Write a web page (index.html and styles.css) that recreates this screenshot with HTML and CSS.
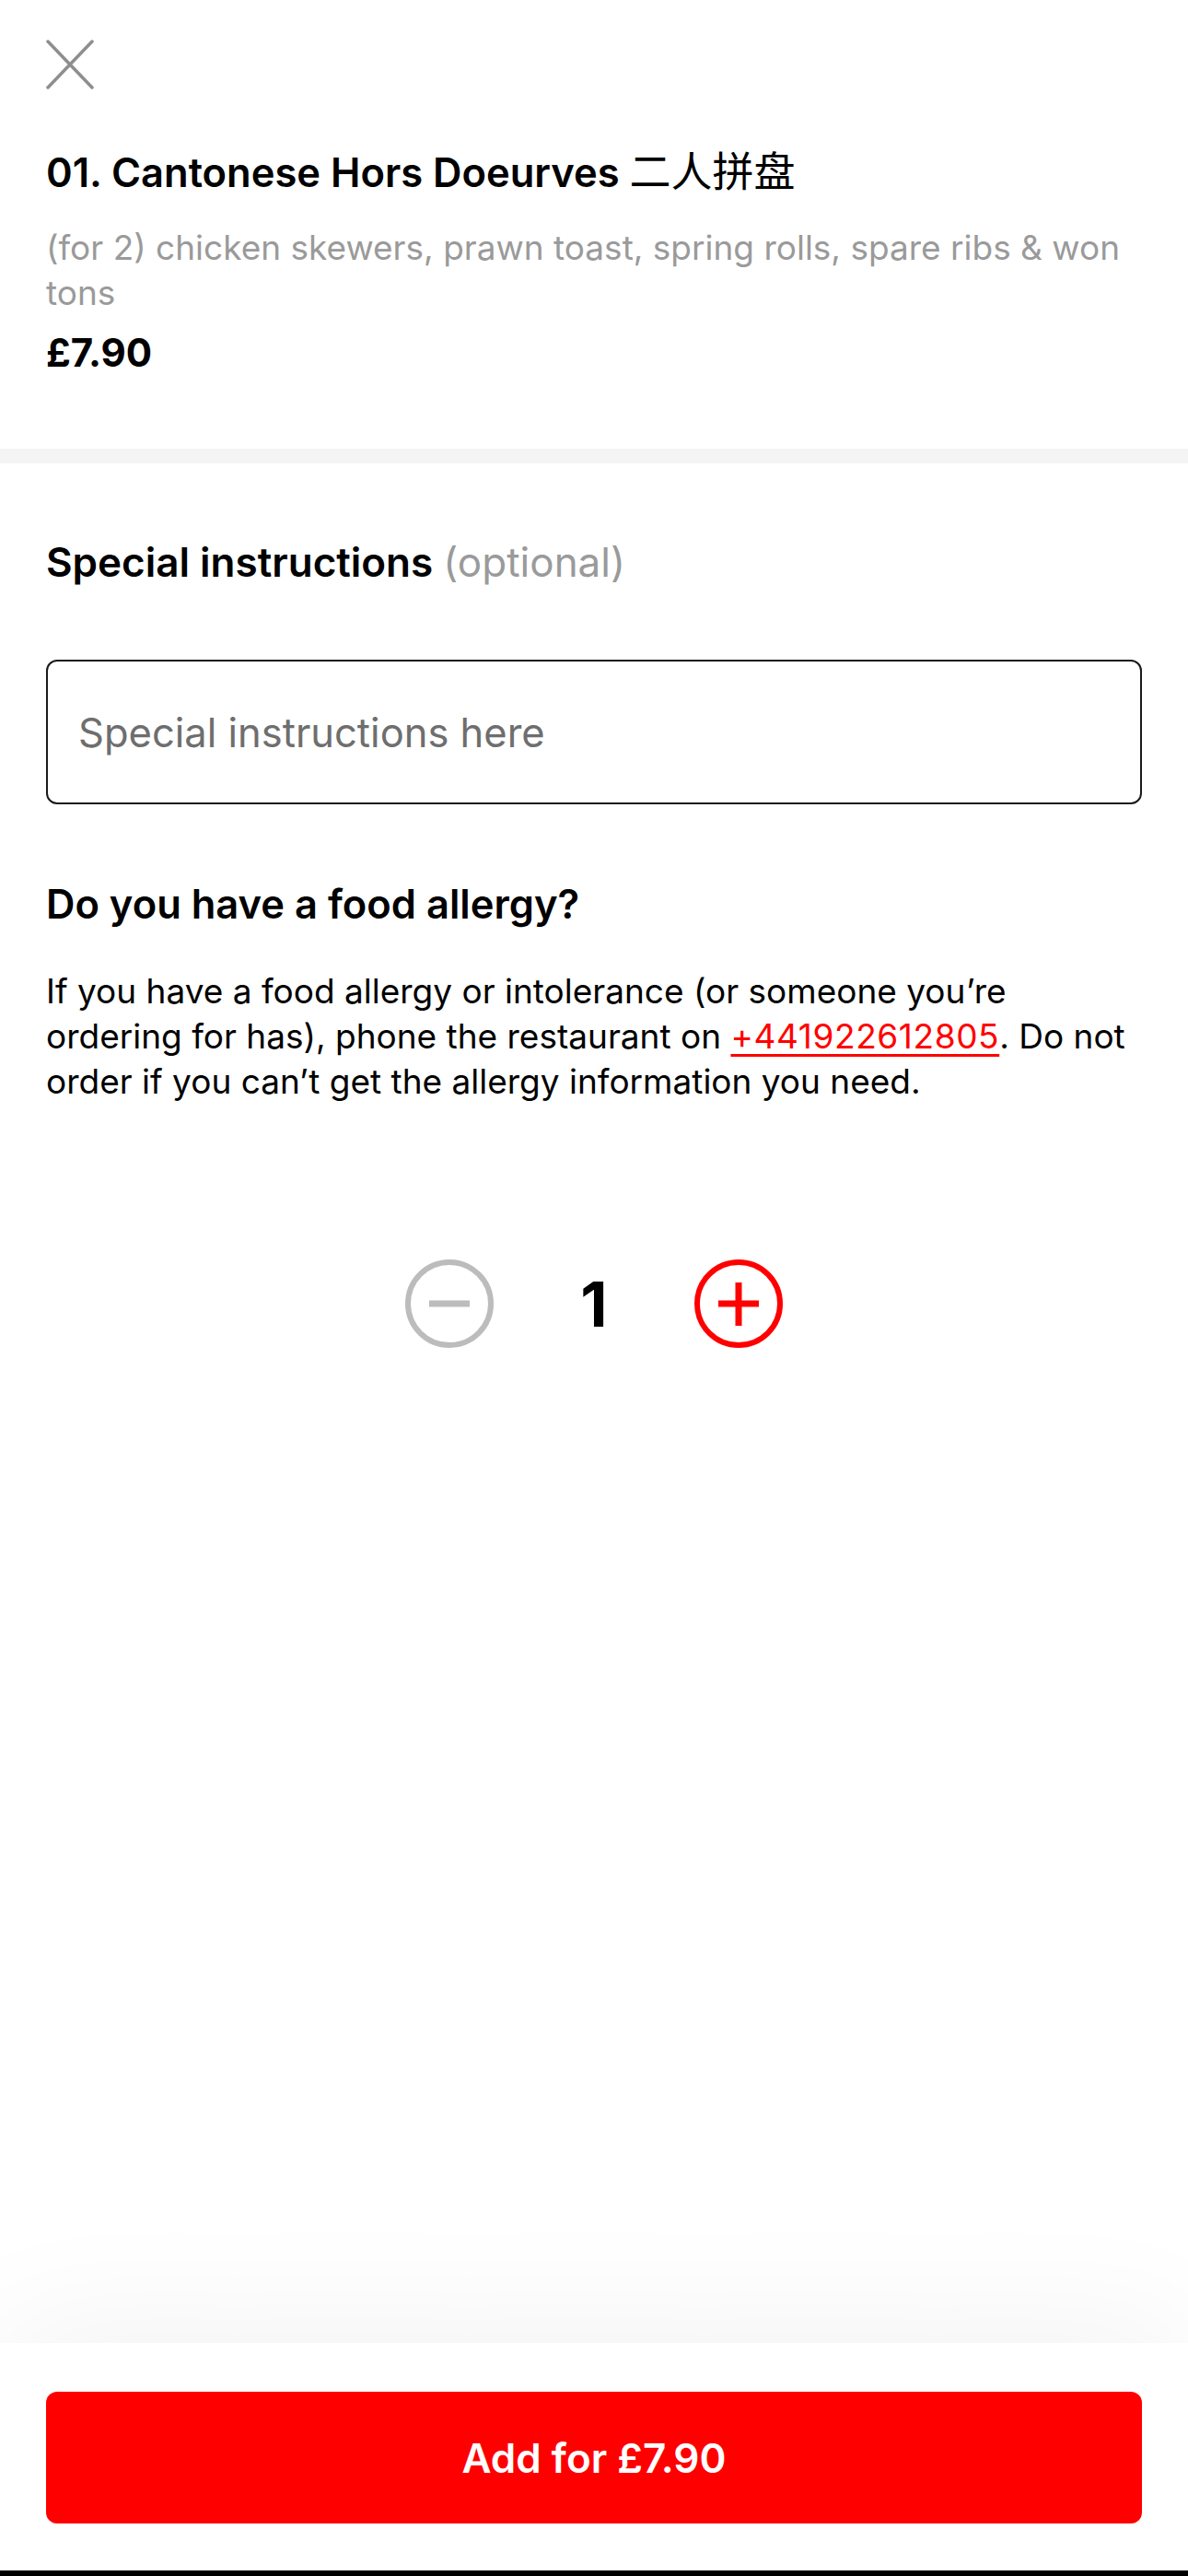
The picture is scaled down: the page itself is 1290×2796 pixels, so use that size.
FILE: index.html
```html
<!DOCTYPE html>
<html lang="en">
<head>
    <meta charset="UTF-8">
    <title>01. Cantonese Hors Doeurves</title>
    <link rel="stylesheet" href="styles.css">
</head>
<body>
    <div class="page">
        <div class="item-header">
            <button class="close-btn" aria-label="Close">
                <svg width="52" height="54" viewBox="0 0 52 54">
                    <path d="M2 2 L50 52 M50 2 L2 52" stroke="#8e8e8e" stroke-width="3.5" stroke-linecap="round" fill="none"/>
                </svg>
            </button>
            <h1 class="item-title">01. Cantonese Hors Doeurves <span class="cjk">二人拼盘</span></h1>
            <p class="item-desc">(for 2) chicken skewers, prawn toast, spring rolls, spare ribs &amp; won tons</p>
            <div class="item-price">£7.90</div>
        </div>

        <div class="divider"></div>

        <div class="options">
            <h2 class="section-title">Special instructions <span class="muted">(optional)</span></h2>
            <input type="text" class="instructions" placeholder="Special instructions here">

            <h2 class="section-title allergy-title">Do you have a food allergy?</h2>
            <p class="allergy-text">If you have a food allergy or intolerance (or someone you’re ordering for has), phone the restaurant on <a href="#">+441922612805</a>. Do not order if you can’t get the allergy information you need.</p>

            <div class="quantity">
                <button class="qty-btn" aria-label="Decrease">
                    <svg width="100" height="100" viewBox="0 0 100 100">
                        <circle cx="50" cy="50" r="45" stroke="#bcbcbc" stroke-width="6" fill="none"/>
                        <path d="M28 50 H72" stroke="#bcbcbc" stroke-width="7"/>
                    </svg>
                </button>
                <span class="qty-value">1</span>
                <button class="qty-btn" aria-label="Increase">
                    <svg width="100" height="100" viewBox="0 0 100 100">
                        <circle cx="50" cy="50" r="45" stroke="#ff0000" stroke-width="6" fill="none"/>
                        <path d="M28 50 H72 M50 27 V74" stroke="#ff0000" stroke-width="7"/>
                    </svg>
                </button>
            </div>
        </div>

        <div class="footer">
            <button class="add-btn">Add for £7.90</button>
        </div>
        <div class="home-bar"></div>
    </div>
</body>
</html>
```

FILE: styles.css
```css
body {
    margin: 0;
    font-family: Inter, "Noto Sans CJK SC", sans-serif;
    color: #000;
    background: #fff;
}
.page {
    display: flex;
    flex-direction: column;
    min-height: 100vh;
}
button {
    font-family: inherit;
    border: none;
    background: none;
    padding: 0;
    cursor: pointer;
}
.item-header {
    padding: 43px 50px 78px;
}
.close-btn {
    display: block;
    width: 52px;
    height: 54px;
}
.close-btn svg {
    display: block;
}
.item-title {
    margin: 64px 0 0;
    font-size: 43.5px;
    line-height: 52px;
    font-weight: 600;
}
.cjk {
    font-family: "Noto Sans CJK SC", sans-serif;
    font-size: 45px;
    font-weight: 400;
    line-height: 1;
}
.item-desc {
    margin: 31px 0 0;
    font-size: 37px;
    line-height: 49px;
    color: #9a9a9a;
}
.item-price {
    margin-top: 15px;
    font-size: 42px;
    line-height: 52px;
    font-weight: 700;
}
.divider {
    height: 16px;
    background: #f4f4f5;
}
.options {
    flex: 1;
    padding: 79px 50px 0;
}
.section-title {
    margin: 0;
    font-size: 44px;
    line-height: 56px;
    font-weight: 600;
}
.muted {
    font-weight: 400;
    color: #9a9a9a;
}
.instructions {
    display: block;
    box-sizing: border-box;
    width: 100%;
    height: 157px;
    margin-top: 78px;
    padding: 0 33px;
    border: 2px solid #1a1a1a;
    border-radius: 12px;
    font-family: inherit;
    font-size: 43.5px;
    color: #000;
    outline: none;
}
.instructions::placeholder {
    color: #6e6e6e;
}
.allergy-title {
    margin-top: 80px;
    font-size: 43.5px;
}
.allergy-text {
    margin: 42px 0 0;
    font-size: 37px;
    line-height: 49px;
}
.allergy-text a {
    color: #ff0000;
    letter-spacing: 0.6px;
    text-decoration-thickness: 3px;
    text-underline-offset: 6px;
}
.quantity {
    display: flex;
    justify-content: center;
    align-items: center;
    margin-top: 167px;
}
.qty-btn svg {
    display: block;
}
.qty-value {
    width: 214px;
    text-align: center;
    font-size: 68px;
    font-weight: 700;
}
.footer {
    padding: 53px 50px 51px;
    background: #fff;
    box-shadow: 0 -10px 150px rgba(0, 0, 0, 0.06);
}
.add-btn {
    display: block;
    width: 100%;
    height: 143px;
    border-radius: 12px;
    background: #ff0000;
    color: #fff;
    font-size: 44px;
    font-weight: 600;
}
.home-bar {
    height: 6px;
    background: #000;
}
```
